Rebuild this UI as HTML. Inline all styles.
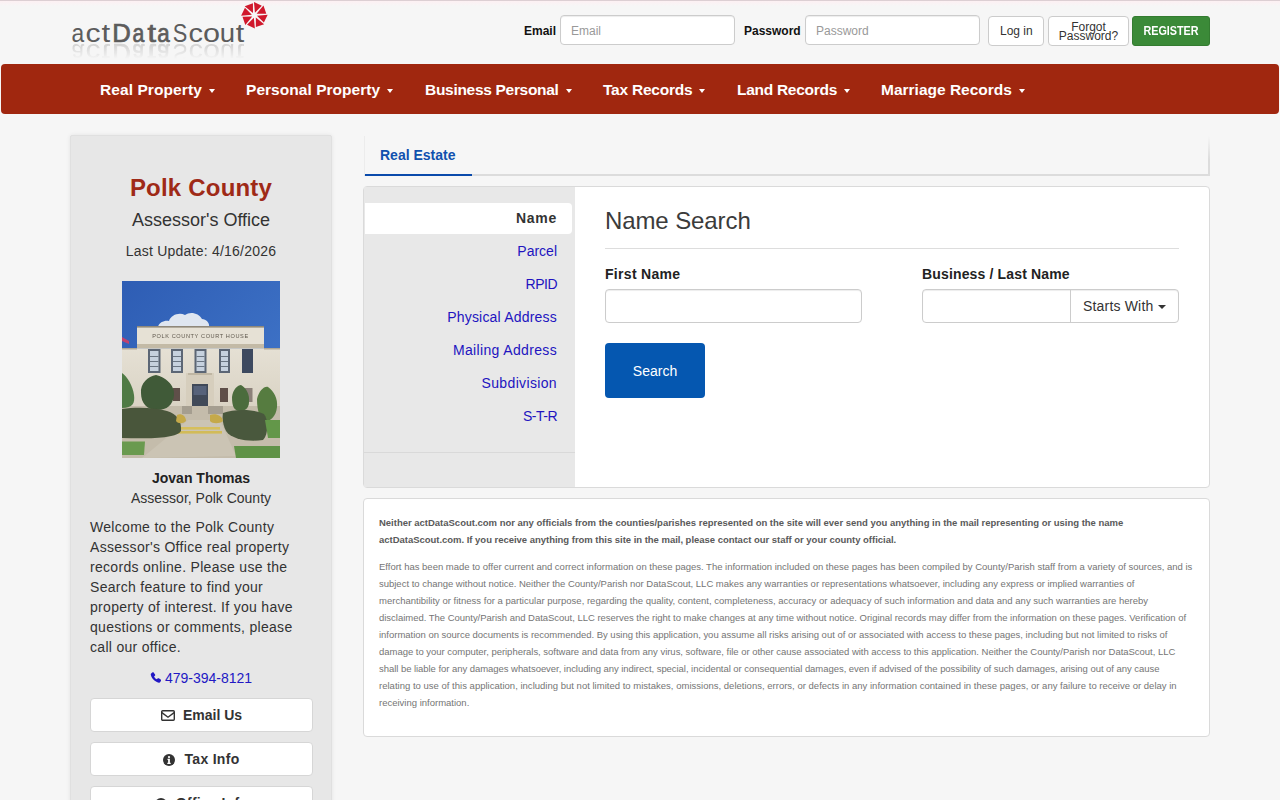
<!DOCTYPE html>
<html><head><meta charset="utf-8">
<style>
*{box-sizing:border-box;margin:0;padding:0}
html,body{width:1280px;height:800px;overflow:hidden}
body{background:#f6f6f6;font-family:"Liberation Sans",sans-serif;color:#333;position:relative}
.a{position:absolute;white-space:nowrap}
#topline{left:0;top:0;width:1280px;height:1px;background:#dccfd3}
#topglow{left:0;top:1px;width:1280px;height:5px;background:linear-gradient(#fdf0f3,#f6f6f6)}
/* logo */
#logo{left:72px;top:17px;font-size:24px;color:#5e5e5e;letter-spacing:2.1px;line-height:30px}
#logo b{color:#555}
#logoref{left:72px;top:33px;font-size:24px;color:#5e5e5e;letter-spacing:2.1px;line-height:30px;transform:scaleY(-1);transform-origin:50% 50%;opacity:.18;
  -webkit-mask-image:linear-gradient(to top,rgba(0,0,0,1),rgba(0,0,0,0) 60%)}
/* header form */
.lbl{font-size:12px;font-weight:bold;color:#111;top:23px;line-height:16px}
.inp{background:#fff;border:1px solid #ccc;border-radius:4px;height:30px;top:15px;box-shadow:inset 0 1px 1px rgba(0,0,0,.075)}
.ph{font-size:12px;color:#999;line-height:16px}
.btn{background:#fff;border:1px solid #ccc;border-radius:4px;top:16px;height:30px;color:#333}
/* navbar */
#nav{left:1px;top:64px;width:1278px;height:50px;background:#a0270f;border-radius:4px}
.ni{top:80px;font-size:15.5px;font-weight:bold;color:#fff;line-height:20px}
.car{display:inline-block;width:0;height:0;border-left:3.5px solid transparent;border-right:3.5px solid transparent;border-top:4px solid #fff;vertical-align:middle;margin-left:7px;position:relative;top:0}
/* sidebar */
#side{left:70px;top:135px;width:262px;height:700px;background:#e7e7e7;border:1px solid #e0e0e0;border-radius:2px;box-shadow:0 0 4px rgba(0,0,0,.08)}
.c{left:70px;width:262px;text-align:center}
#pc{top:173px;font-size:24px;font-weight:bold;color:#9f2a17;line-height:30px;letter-spacing:.2px}
#ao{top:208px;font-size:18px;color:#333;line-height:24px}
#lu{top:241px;font-size:14px;color:#333;line-height:20px;letter-spacing:.23px}
#img{left:122px;top:281px;width:158px;height:177px;overflow:hidden}
#jt{top:468px;font-size:14px;font-weight:bold;color:#222;line-height:20px}
#ap{top:488px;font-size:14px;color:#333;line-height:20px}
#wel{left:90px;top:517px;font-size:14px;line-height:20px;color:#333;letter-spacing:.3px;white-space:nowrap}
#ph{top:668px;font-size:14px;color:#2218c4;line-height:20px}
.sb{left:90px;width:223px;height:34px;background:#fff;border:1px solid #d6d6d6;border-radius:4px;text-align:center;font-size:14px;font-weight:bold;color:#333;line-height:32px}
/* tabs */
#tabs{left:364px;top:136px;width:846px;height:40px;border-left:1px solid #ececec;border-bottom:2px solid #dcdcdc}
#tabr{left:1208px;top:136px;width:2px;height:40px;background:linear-gradient(rgba(220,220,220,0),#dcdcdc 60%)}
#tabre{left:380px;top:145px;font-size:14px;font-weight:bold;color:#1050ae;line-height:20px}
#tabul{left:365px;top:174px;width:107px;height:2px;background:#0a4aab}
/* search panel */
#sp{left:363px;top:186px;width:847px;height:302px;background:#fff;border:1px solid #dadada;border-radius:4px;overflow:hidden}
#spl{left:364px;top:187px;width:211px;height:300px;background:#e8e8e8}
#spsep{left:364px;top:452px;width:211px;height:1px;background:#d9d9d9}
#act{left:365px;top:203px;width:207px;height:31px;background:#fff;border-radius:0 4px 4px 0}
.li{left:365px;width:192px;text-align:right;font-size:14px;color:#2214c0;line-height:20px}
#ns{left:605px;top:206px;font-size:24px;color:#3b3b3b;line-height:30px;letter-spacing:-.1px}
#hr{left:605px;top:248px;width:574px;height:1px;background:#ddd}
.fl{font-size:14px;font-weight:bold;color:#222;line-height:20px;top:264px}
.fi{top:289px;height:34px;background:#fff;border:1px solid #ccc;border-radius:4px;box-shadow:inset 0 1px 1px rgba(0,0,0,.075)}
#sbtn{left:605px;top:343px;width:100px;height:55px;background:#0557b0;border-radius:4px;color:#fff;font-size:14px;line-height:57px;text-align:center}
/* disclaimer */
#disc{left:363px;top:498px;width:847px;height:239px;background:#fff;border:1px solid #dadada;border-radius:4px}
.dl{left:379px;font-size:9.5px;line-height:17px;color:#757575}
.db{font-weight:bold;color:#5a5a5a}
</style></head><body>
<div class="a" id="topline"></div>
<div class="a" id="topglow"></div>

<svg class="a" style="left:0;top:0" width="290" height="64" viewBox="0 0 290 64">
<defs>
<linearGradient id="rg" x1="0" y1="43" x2="0" y2="59" gradientUnits="userSpaceOnUse"><stop offset="0" stop-color="#fff" stop-opacity="0.25"/><stop offset="1" stop-color="#fff" stop-opacity="0"/></linearGradient>
<mask id="rm" maskUnits="userSpaceOnUse" x="0" y="0" width="290" height="64"><rect x="0" y="42" width="290" height="22" fill="url(#rg)"/></mask>
</defs>
<g font-family="Liberation Sans" font-size="25" fill="#5c5c5c">
<text transform="translate(71.54,41.5) scale(0.911,1)">a</text>
<text transform="translate(85.44,41.5) scale(1.204,1)">c</text>
<text transform="translate(101.53,41.5) scale(1.25,1)">t</text>
<text transform="translate(112.24,41.5) scale(1.027,1)" stroke="#5c5c5c" stroke-width="0.7">D</text>
<text transform="translate(132.46,41.5) scale(0.848,1)" stroke="#5c5c5c" stroke-width="0.7">a</text>
<text transform="translate(147.39,41.5) scale(1.219,1)" stroke="#5c5c5c" stroke-width="0.7">t</text>
<text transform="translate(157.21,41.5) scale(0.895,1)" stroke="#5c5c5c" stroke-width="0.7">a</text>
<text transform="translate(172.8,41.5) scale(0.87,1)">S</text>
<text transform="translate(188.58,41.5) scale(1.157,1)">c</text>
<text transform="translate(203.01,41.5) scale(1.225,1)">o</text>
<text transform="translate(219.71,41.5) scale(1.101,1)">u</text>
<text transform="translate(235.84,41.5) scale(1.219,1)">t</text>
</g>
<g mask="url(#rm)"><g font-family="Liberation Sans" font-size="25" fill="#5c5c5c" transform="translate(0,85.5) scale(1,-1)">
<text transform="translate(71.54,41.5) scale(0.911,1)">a</text>
<text transform="translate(85.44,41.5) scale(1.204,1)">c</text>
<text transform="translate(101.53,41.5) scale(1.25,1)">t</text>
<text transform="translate(112.24,41.5) scale(1.027,1)" stroke="#5c5c5c" stroke-width="0.7">D</text>
<text transform="translate(132.46,41.5) scale(0.848,1)" stroke="#5c5c5c" stroke-width="0.7">a</text>
<text transform="translate(147.39,41.5) scale(1.219,1)" stroke="#5c5c5c" stroke-width="0.7">t</text>
<text transform="translate(157.21,41.5) scale(0.895,1)" stroke="#5c5c5c" stroke-width="0.7">a</text>
<text transform="translate(172.8,41.5) scale(0.87,1)">S</text>
<text transform="translate(188.58,41.5) scale(1.157,1)">c</text>
<text transform="translate(203.01,41.5) scale(1.225,1)">o</text>
<text transform="translate(219.71,41.5) scale(1.101,1)">u</text>
<text transform="translate(235.84,41.5) scale(1.219,1)">t</text>
</g></g>
<g transform="translate(254.4,15.2)" fill="#d0182c">
<path d="M-0.46,-13.29 L7.39,-9.46 L0.54,-2.54 Z M9.07,-9.73 L11.91,-1.46 L2.18,-1.42 Z M13.29,-0.46 L9.46,7.39 L2.54,0.54 Z M9.73,9.07 L1.46,11.91 L1.42,2.18 Z M0.46,13.29 L-7.39,9.46 L-0.54,2.54 Z M-9.07,9.73 L-11.91,1.46 L-2.18,1.42 Z M-13.29,0.46 L-9.46,-7.39 L-2.54,-0.54 Z M-9.73,-9.07 L-1.46,-11.91 L-1.42,-2.18 Z"/>
</g>
</svg>

<div class="a lbl" style="left:524px">Email</div>
<div class="a inp" style="left:560px;width:175px"></div>
<div class="a ph" style="left:571px;top:23px">Email</div>
<div class="a lbl" style="left:744px">Password</div>
<div class="a inp" style="left:805px;width:175px"></div>
<div class="a ph" style="left:816px;top:23px">Password</div>
<div class="a btn" style="left:988px;width:56px"></div>
<div class="a" style="left:1000px;top:23px;font-size:12px;line-height:16px;color:#333">Log in</div>
<div class="a btn" style="left:1048px;width:81px"></div>
<div class="a" style="left:1048px;top:22.5px;width:81px;text-align:center;font-size:12px;line-height:9.3px;color:#333;white-space:normal">Forgot<br>Password?</div>
<div class="a" style="left:1132px;top:16px;width:78px;height:30px;background:#3b8a38;border-radius:3px;border:1px solid #347c31"></div>
<div class="a" style="left:1132px;top:23px;width:78px;text-align:center;font-size:12px;font-weight:bold;color:#fff;line-height:16px;transform:scaleX(.9)">REGISTER</div>

<div class="a" id="nav"></div>
<div class="a ni" style="left:100px;letter-spacing:.08px">Real Property<span class="car"></span></div>
<div class="a ni" style="left:246px;letter-spacing:.04px">Personal Property<span class="car"></span></div>
<div class="a ni" style="left:425px;letter-spacing:-.3px">Business Personal<span class="car"></span></div>
<div class="a ni" style="left:603px;letter-spacing:-.22px">Tax Records<span class="car"></span></div>
<div class="a ni" style="left:737px;letter-spacing:-.28px">Land Records<span class="car"></span></div>
<div class="a ni" style="left:881px;letter-spacing:0px">Marriage Records<span class="car"></span></div>

<div class="a" id="side"></div>
<div class="a c" id="pc">Polk County</div>
<div class="a c" id="ao">Assessor's Office</div>
<div class="a c" id="lu">Last Update: 4/16/2026</div>
<div class="a" id="img">
<svg width="158" height="177" viewBox="0 0 158 177">
  <defs>
    <linearGradient id="sky" x1="0" y1="0" x2="1" y2="1"><stop offset="0" stop-color="#2e5db4"/><stop offset="1" stop-color="#4379cc"/></linearGradient>
    <linearGradient id="bld" x1="0" y1="0" x2="0" y2="1"><stop offset="0" stop-color="#e5e0d4"/><stop offset="1" stop-color="#d9d2c3"/></linearGradient>
    <filter id="bl" x="-10%" y="-10%" width="120%" height="120%"><feGaussianBlur stdDeviation="0.6"/></filter>
  </defs>
  <rect width="158" height="177" fill="url(#sky)"/>
  <g filter="url(#bl)">
  <path d="M36,46 C37,41 43,39 47,40 C49,34 57,31 63,34 C68,30 77,32 80,38 C84,38 88,42 87,46 Z" fill="#dfe6f0"/>
  <rect x="15" y="45.5" width="127" height="22" fill="#e6e1d5"/>
  <rect x="15" y="45" width="127" height="1.6" fill="#8f887a"/>
  <rect x="15" y="63" width="127" height="4.5" fill="#c3baa6"/>
  <rect x="0" y="67.5" width="158" height="62" fill="url(#bld)"/>
  <rect x="0" y="67" width="15" height="1.5" fill="#b1a895"/>
  <rect x="142" y="67" width="16" height="1.5" fill="#b1a895"/>
  <text x="78.5" y="57" font-size="5.6" text-anchor="middle" fill="#5f584c" font-family="Liberation Sans" letter-spacing=".6">POLK COUNTY COURT HOUSE</text>
  <g fill="#5c6674">
    <rect x="26" y="68" width="12.5" height="24"/><rect x="49" y="68" width="12" height="24"/><rect x="72.5" y="68" width="12" height="24"/><rect x="97" y="68" width="11" height="24"/><rect x="120" y="68" width="11" height="24" fill="#3e4a5e"/>
  </g>
  <g fill="#c6d1de">
    <rect x="28" y="70" width="8.5" height="20"/><rect x="51" y="70" width="8" height="20"/><rect x="74.5" y="70" width="8" height="20"/><rect x="99" y="70" width="7" height="20"/>
  </g>
  <g fill="#6a7482">
    <rect x="28" y="75" width="8.5" height="1"/><rect x="51" y="75" width="8" height="1"/><rect x="74.5" y="75" width="8" height="1"/><rect x="99" y="75" width="7" height="1"/>
    <rect x="28" y="80" width="8.5" height="1"/><rect x="51" y="80" width="8" height="1"/><rect x="74.5" y="80" width="8" height="1"/><rect x="99" y="80" width="7" height="1"/>
    <rect x="28" y="85" width="8.5" height="1"/><rect x="51" y="85" width="8" height="1"/><rect x="74.5" y="85" width="8" height="1"/><rect x="99" y="85" width="7" height="1"/>
  </g>
  <rect x="64" y="92" width="28" height="34" fill="#d6ceBD"/>
  <rect x="66" y="92" width="24" height="2" fill="#bfb6a3"/>
  <rect x="70" y="103" width="16" height="23" fill="#3f4858"/>
  <rect x="71.5" y="105" width="13" height="9" fill="#56627a"/>
  <g fill="#5e4f48"><rect x="51" y="107" width="7" height="13"/><rect x="98" y="107" width="8" height="14"/><rect x="122.5" y="107" width="8" height="14" fill="#8c8179"/></g>
  <path d="M0,56 L7,60 L7,63 L0,60 Z" fill="#c0436e"/>
  <rect x="0" y="125" width="158" height="52" fill="#c4bcab"/>
  <rect x="86" y="125" width="15" height="8" fill="#a59e90"/>
  <rect x="60" y="125" width="10" height="8" fill="#a59e90"/>
  <path d="M66,139 L98,139 L114,175 L20,177 Z" fill="#cbc4b4"/>
  <rect x="48" y="146" width="50" height="2.6" fill="#d6bf5c"/>
  <rect x="46" y="150" width="54" height="2.6" fill="#d2bb58"/>
  <path d="M0,92 C5,95 11,105 12,114 C13,122 11,127 0,127 Z" fill="#4f7a45"/>
  <path d="M19,112 C18,103 26,95 34,94 C43,96 53,104 52,114 C51,124 45,129 35,129 C25,129 19,122 19,112 Z" fill="#3f5a37"/>
  <path d="M110,116 C111,108 116,104 119,104 C124,107 128,113 127,121 C127,128 122,130 118,130 C112,130 110,125 110,116 Z" fill="#4b6c3d"/>
  <path d="M135,118 C137,110 142,105 146,106 C152,110 156,118 155,126 C154,136 148,140 144,140 C138,140 135,130 135,118 Z" fill="#567b40"/>
  <path d="M0,128 C12,126 32,126 45,130 C55,133 60,140 59,150 C55,157 30,158 0,157 Z" fill="#48573b"/>
  <path d="M101,132 C112,128 132,128 142,133 C147,140 146,154 141,159 C128,161 110,159 104,150 C101,144 100,138 101,132 Z" fill="#4a593d"/>
  <path d="M55,134 C59,132 64,135 64,140 C61,143 56,143 54,140 Z" fill="#c5a94a"/>
  <path d="M88,134 C93,132 100,134 101,140 C98,143 90,143 88,140 Z" fill="#c5a94a"/>
  <path d="M0,160.5 L23,160.5 L22,174 L0,174 Z" fill="#6a9a4f"/>
  <path d="M143,139 L158,139 L158,157 L146,157 Z" fill="#64974a"/>
  <path d="M112,165 L158,165 L158,177 L114,177 Z" fill="#5e9246"/>
  </g>
</svg>
</div>
<div class="a c" id="jt">Jovan Thomas</div>
<div class="a c" id="ap">Assessor, Polk County</div>
<div class="a" id="wel">Welcome to the Polk County<br>Assessor's Office real property<br>records online. Please use the<br>Search feature to find your<br>property of interest. If you have<br>questions or comments, please<br>call our office.</div>
<div class="a c" id="ph"><svg width="11.5" height="11.5" viewBox="0 0 16 16" style="vertical-align:0px;margin-right:3.5px"><path fill="#2218c4" d="M3.6 0.5c0.6-0.3 1.3-0.2 1.7 0.4l1.7 2.6c0.4 0.6 0.3 1.3-0.2 1.8l-1.2 1c0.8 1.7 2.1 3.1 3.9 3.9l1-1.2c0.5-0.5 1.2-0.6 1.8-0.2l2.6 1.7c0.6 0.4 0.7 1.1 0.4 1.7l-1 1.8c-0.4 0.7-1.2 1.1-2 0.9C6.8 13.7 2.3 9.2 1.1 3.9 0.9 3.1 1.3 2.3 2 1.9z"/></svg>479-394-8121</div>
<div class="a sb" style="top:698px"><svg width="14" height="11" viewBox="0 0 14 11" style="vertical-align:-1px;margin-right:8px"><rect x="0.7" y="0.7" width="12.6" height="9.6" rx="1" fill="none" stroke="#333" stroke-width="1.4"/><path d="M0.9 2.6 L7 7.2 L13.1 2.6" fill="none" stroke="#333" stroke-width="1.4"/></svg>Email Us</div>
<div class="a sb" style="top:742px;letter-spacing:.3px"><svg width="12" height="12" viewBox="0 0 12 12" style="vertical-align:-1.5px;margin-right:9px"><circle cx="6" cy="6" r="6" fill="#333"/><path d="M4.5,4.8 H6.9 V8.7 H7.7 V9.9 H4.3 V8.7 H5.1 V6 H4.5 Z" fill="#fff"/><circle cx="6" cy="3.1" r="1.1" fill="#fff"/></svg>Tax Info</div>
<div class="a sb" style="top:786px;letter-spacing:.3px"><svg width="12" height="12" viewBox="0 0 12 12" style="vertical-align:-1.5px;margin-right:9px"><circle cx="6" cy="6" r="6" fill="#333"/><path d="M4.5,4.8 H6.9 V8.7 H7.7 V9.9 H4.3 V8.7 H5.1 V6 H4.5 Z" fill="#fff"/><circle cx="6" cy="3.1" r="1.1" fill="#fff"/></svg>Office Info</div>

<div class="a" id="tabs"></div>
<div class="a" id="tabr"></div>
<div class="a" id="tabre">Real Estate</div>
<div class="a" id="tabul"></div>

<div class="a" id="sp"></div>
<div class="a" id="spl"></div>
<div class="a" id="spsep"></div>
<div class="a" id="act"></div>
<div class="a li" style="top:208px;font-weight:bold;color:#333;letter-spacing:.7px">Name</div>
<div class="a li" style="top:241px">Parcel</div>
<div class="a li" style="top:274px;letter-spacing:-.5px">RPID</div>
<div class="a li" style="top:307px;letter-spacing:.2px">Physical Address</div>
<div class="a li" style="top:340px;letter-spacing:.35px">Mailing Address</div>
<div class="a li" style="top:373px;letter-spacing:.35px">Subdivision</div>
<div class="a li" style="top:406px;letter-spacing:-.5px">S-T-R</div>
<div class="a" id="ns">Name Search</div>
<div class="a" id="hr"></div>
<div class="a fl" style="left:605px;letter-spacing:.3px">First Name</div>
<div class="a fl" style="left:922px;letter-spacing:.15px">Business / Last Name</div>
<div class="a fi" style="left:605px;width:257px"></div>
<div class="a fi" style="left:922px;width:257px"></div>
<div class="a" style="left:1070px;top:290px;width:1px;height:32px;background:#ccc"></div>
<div class="a" style="left:1083px;top:296px;font-size:14px;line-height:20px;color:#333;letter-spacing:.18px">Starts With<span class="car" style="border-top-color:#333;margin-left:5px;border-left-width:4px;border-right-width:4px"></span></div>
<div class="a" id="sbtn">Search</div>

<div class="a" id="disc"></div>
<div class="a dl db" style="top:514px;letter-spacing:-0.010px">Neither actDataScout.com nor any officials from the counties/parishes represented on the site will ever send you anything in the mail representing or using the name</div>
<div class="a dl db" style="top:531px;letter-spacing:-0.024px">actDataScout.com. If you receive anything from this site in the mail, please contact our staff or your county official.</div>
<div class="a dl" style="top:558px;letter-spacing:-0.004px">Effort has been made to offer current and correct information on these pages. The information included on these pages has been compiled by County/Parish staff from a variety of sources, and is</div>
<div class="a dl" style="top:575px;letter-spacing:-0.014px">subject to change without notice. Neither the County/Parish nor DataScout, LLC makes any warranties or representations whatsoever, including any express or implied warranties of</div>
<div class="a dl" style="top:592px;letter-spacing:0.008px">merchantibility or fitness for a particular purpose, regarding the quality, content, completeness, accuracy or adequacy of such information and data and any such warranties are hereby</div>
<div class="a dl" style="top:609px;letter-spacing:-0.022px">disclaimed. The County/Parish and DataScout, LLC reserves the right to make changes at any time without notice. Original records may differ from the information on these pages. Verification of</div>
<div class="a dl" style="top:626px;letter-spacing:-0.019px">information on source documents is recommended. By using this application, you assume all risks arising out of or associated with access to these pages, including but not limited to risks of</div>
<div class="a dl" style="top:643px;letter-spacing:-0.025px">damage to your computer, peripherals, software and data from any virus, software, file or other cause associated with access to this application. Neither the County/Parish nor DataScout, LLC</div>
<div class="a dl" style="top:660px;letter-spacing:-0.048px">shall be liable for any damages whatsoever, including any indirect, special, incidental or consequential damages, even if advised of the possibility of such damages, arising out of any cause</div>
<div class="a dl" style="top:677px;letter-spacing:0.012px">relating to use of this application, including but not limited to mistakes, omissions, deletions, errors, or defects in any information contained in these pages, or any failure to receive or delay in</div>
<div class="a dl" style="top:694px">receiving information.</div>
</body></html>
